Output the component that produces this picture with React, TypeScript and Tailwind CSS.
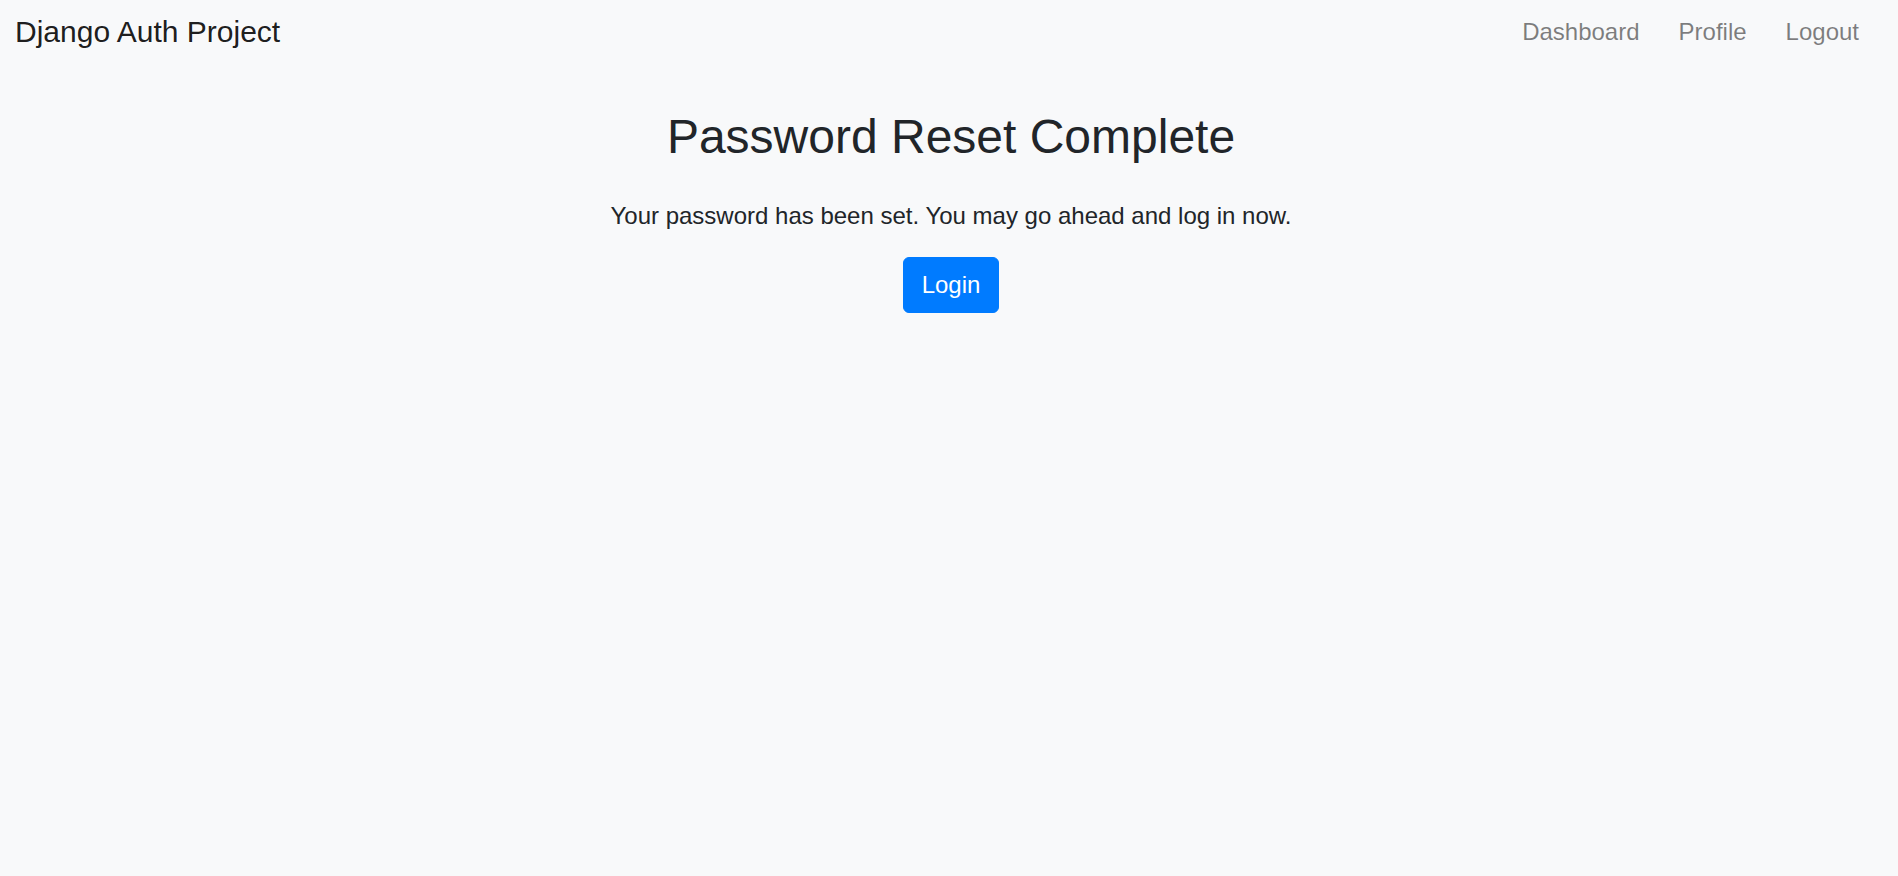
const App = () => {
    return (
        <div className="min-h-screen w-full bg-[#f8f9fa] font-['Liberation_Sans',Arial,sans-serif]">
            <nav className="flex h-[63px] items-center justify-between pl-[15px] pr-[39px]">
                <a href="#" className="text-[30px] leading-[44px] text-black/90">
                    Django Auth Project
                </a>
                <ul className="flex gap-[39px] text-[24px] leading-[36px] text-black/50">
                    <li>
                        <a href="#">Dashboard</a>
                    </li>
                    <li>
                        <a href="#">Profile</a>
                    </li>
                    <li>
                        <a href="#">Logout</a>
                    </li>
                </ul>
            </nav>
            <main className="flex flex-col items-center pl-[4px] pt-[45px] text-[#212529]">
                <h2 className="text-[48px] leading-[57.6px]">Password Reset Complete</h2>
                <p className="mt-[32px] text-[24px] leading-[36px]">
                    Your password has been set. You may go ahead and log in now.
                </p>
                <a
                    href="#"
                    className="mt-[23px] flex h-[56px] w-[96px] items-center justify-center rounded-[6px] border border-[#007bff] bg-[#007bff] text-[24px] leading-[36px] text-white"
                >
                    Login
                </a>
            </main>
        </div>
    );
};

export default App;
